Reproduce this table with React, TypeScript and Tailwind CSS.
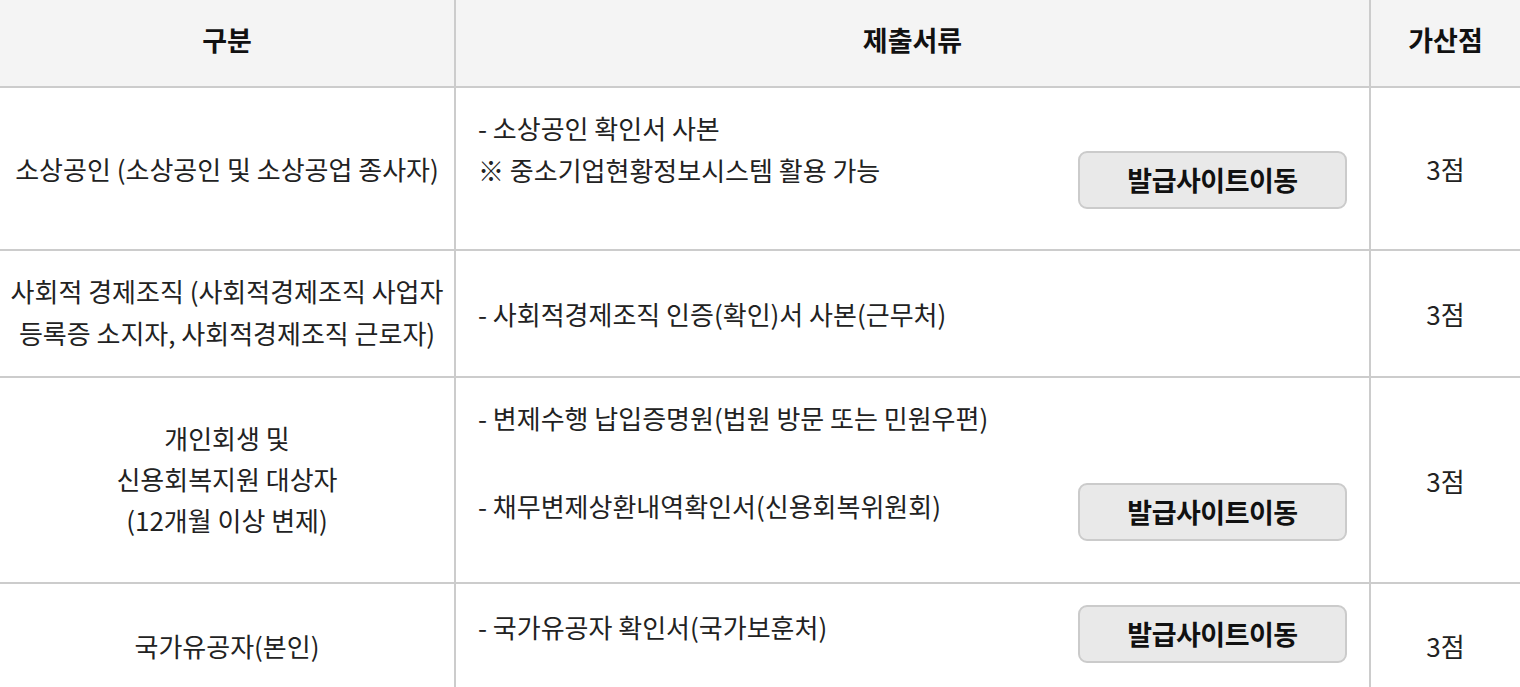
const font = {
  fontFamily: '"Noto Sans CJK KR", "Noto Sans", sans-serif',
};

function IssueButton({ className = "" }: { className?: string }) {
  return (
    <button
      className={
        "h-[58px] w-[269px] shrink-0 rounded-[9px] border-2 border-[#cbcbcb] bg-[#e9e9e9] text-[27px] font-bold tracking-[-0.5px] text-[#111] " +
        className
      }
    >
      발급사이트이동
    </button>
  );
}

export default function App() {
  const cell = "border-b-2 border-[#cccccc]";
  const mid = "border-l-2 border-r-2 border-[#cccccc]";
  const head = "flex h-[88px] items-center justify-center bg-[#f4f4f4] pb-[6px] text-[27px] font-bold text-[#111]";
  return (
    <div
      className="w-[1520px] bg-white text-[26px] tracking-[0px] text-[#222]"
      style={font}
    >
      <div className="grid grid-cols-[454px_917px_149px]">
        {/* header */}
        <div className={`${cell} ${head}`}>구분</div>
        <div className={`${cell} ${mid} ${head}`}>제출서류</div>
        <div className={`${cell} ${head}`}>가산점</div>

        {/* row 1 */}
        <div className={`${cell} flex h-[163px] items-center justify-center text-center`}>
          소상공인 (소상공인 및 소상공업 종사자)
        </div>
        <div className={`${cell} ${mid} flex h-[163px] items-start justify-between px-[22px]`}>
          <div className="mt-[19px] leading-[42px]">
            <p>- 소상공인 확인서 사본</p>
            <p>※ 중소기업현황정보시스템 활용 가능</p>
          </div>
          <IssueButton className="mt-[63px]" />
        </div>
        <div className={`${cell} flex h-[163px] items-center justify-center`}>3점</div>

        {/* row 2 */}
        <div className={`${cell} flex h-[127px] items-center justify-center pb-[3px] text-center leading-[42px]`}>
          <p>
            사회적 경제조직 (사회적경제조직 사업자
            <br />
            등록증 소지자, 사회적경제조직 근로자)
          </p>
        </div>
        <div className={`${cell} ${mid} flex h-[127px] items-center px-[22px]`}>
          - 사회적경제조직 인증(확인)서 사본(근무처)
        </div>
        <div className={`${cell} flex h-[127px] items-center justify-center`}>3점</div>

        {/* row 3 */}
        <div className={`${cell} flex h-[206px] items-center justify-center pb-[4px] text-center leading-[41px]`}>
          <p>
            개인회생 및
            <br />
            신용회복지원 대상자
            <br />
            (12개월 이상 변제)
          </p>
        </div>
        <div className={`${cell} ${mid} flex h-[206px] flex-col px-[22px]`}>
          <p className="mt-[19px] leading-[42px]">- 변제수행 납입증명원(법원 방문 또는 민원우편)</p>
          <div className="flex items-start justify-between">
            <p className="mt-[46px] leading-[42px]">- 채무변제상환내역확인서(신용회복위원회)</p>
            <IssueButton className="mt-[44px]" />
          </div>
        </div>
        <div className={`${cell} flex h-[206px] items-center justify-center`}>3점</div>

        {/* row 4 */}
        <div className={`${cell} flex h-[128px] items-center justify-center pb-[4px] text-center`}>
          국가유공자(본인)
        </div>
        <div className={`${cell} ${mid} flex h-[128px] items-start justify-between px-[22px]`}>
          <p className="mt-[22px] leading-[42px]">- 국가유공자 확인서(국가보훈처)</p>
          <IssueButton className="mt-[21px]" />
        </div>
        <div className={`${cell} flex h-[128px] items-center justify-center pb-[4px]`}>3점</div>
      </div>
    </div>
  );
}
